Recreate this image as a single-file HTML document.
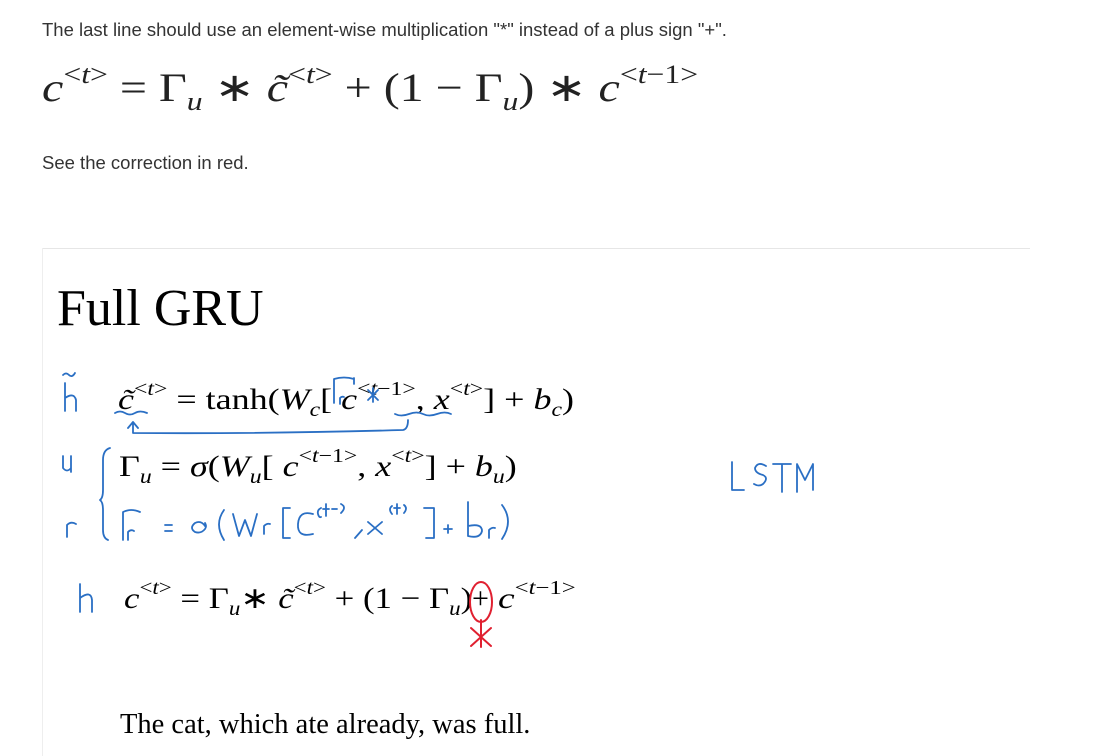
<!DOCTYPE html>
<html><head><meta charset="utf-8"><style>
body{margin:0;width:1106px;height:756px;background:#fff;position:relative;overflow:hidden;font-family:"Liberation Serif",serif;}
.a{position:absolute;white-space:nowrap;line-height:1;transform-origin:left top;}
.t{font-family:"Liberation Sans",sans-serif;font-size:18.5px;color:#333;}
i{font-style:italic}
sup{font-size:66%;vertical-align:0;position:relative;top:-0.7em}
sub{font-size:66%;vertical-align:0;position:relative;top:0.35em}
</style></head><body>
<div class="a t" style="left:42px;top:21px">The last line should use an element-wise multiplication "*" instead of a plus sign "+".</div>
<div class="a" style="left:42px;top:68px;font-size:40px;color:#222;transform:scaleX(1.2)"><i>c</i><sup>&lt;<i>t</i>&gt;</sup> = Γ<sub><i>u</i></sub> ∗ <i>c̃</i><sup>&lt;<i>t</i>&gt;</sup> + (1 − Γ<sub><i>u</i></sub>) ∗ <i>c</i><sup>&lt;<i>t</i>−1&gt;</sup></div>
<div class="a t" style="left:42px;top:154px">See the correction in red.</div>
<div class="a" style="left:42px;top:248px;width:988px;height:1px;background:#e6e6e6"></div>
<div class="a" style="left:42px;top:248px;width:1px;height:508px;background:#eee"></div>
<div class="a" style="left:57px;top:283px;font-size:52px;color:#000">Full GRU</div>
<div class="a" style="left:118px;top:385px;font-size:30px;transform:scaleX(1.2)"><i>c̃</i><sup>&lt;<i>t</i>&gt;</sup> = tanh(<i>W<sub>c</sub></i>[ <i>c</i><sup>&lt;<i>t</i>−1&gt;</sup>, <i>x</i><sup>&lt;<i>t</i>&gt;</sup>] + <i>b<sub>c</sub></i>)</div>
<div class="a" style="left:119px;top:452px;font-size:30px;transform:scaleX(1.2)">Γ<sub><i>u</i></sub> = <i>σ</i>(<i>W<sub>u</sub></i>[ <i>c</i><sup>&lt;<i>t</i>−1&gt;</sup>, <i>x</i><sup>&lt;<i>t</i>&gt;</sup>] + <i>b<sub>u</sub></i>)</div>
<div class="a" style="left:124px;top:584px;font-size:30px;transform:scaleX(1.16)"><i>c</i><sup>&lt;<i>t</i>&gt;</sup> = Γ<sub><i>u</i></sub>∗ <i>c̃</i><sup>&lt;<i>t</i>&gt;</sup> + (1 − Γ<sub><i>u</i></sub>)</div>
<div class="a" style="left:472px;top:584px;font-size:30px">+</div>
<div class="a" style="left:498px;top:584px;font-size:30px;transform:scaleX(1.25)"><i>c</i><sup>&lt;<i>t</i>−1&gt;</sup></div>
<div class="a" style="left:120px;top:711px;font-size:28.5px">The cat, which ate already, was full.</div>
<svg class="a" style="left:0;top:0" width="1106" height="756" fill="none" stroke-linecap="round" stroke-linejoin="round">
<g stroke="#2a6fc4" stroke-width="1.8">
<path d="M63 375q3-3 6 0t6-2"/><path d="M65 383v28M65 398q9-6 11 2v11"/>
<path d="M115 413q5-3 10 0t10 0t12 0"/>
<path d="M128 428l5-6 5 6M133 423v10q130 1 270-3q5-1 5-10"/>
<path d="M395 414q6 3 14 0t14 0t14 0t14 0"/>
<path d="M334 403v-24q10-3 20 0M354 378v6M340 404v-6q2-2 4-1"/>
<path d="M368 390l10 10M378 390l-10 10M373 388v14"/>
<path d="M110 448q-7 2-7 12v30q0 8-3 10q3 2 3 10v20q0 8 5 10"/>
<path d="M63 456v12q4 5 8 0v-12M71 456v16"/>
<path d="M67 537v-12q4-4 9-1"/>
<path d="M123 540v-28q8-4 17 0M128 540v-8q3-3 6-1"/><path d="M165 525h7M165 531h7"/>
<path d="M205 526q-4-6-10-3q-6 5 0 9q6 2 10-3q2-3 0-6"/><path d="M224 510q-10 14 0 30"/>
<path d="M233 514l6 22 6-16 6 16 6-22M264 534v-8q3-3 6-2"/>
<path d="M290 508h-7v30h7"/><path d="M313 514q-14-4-15 10t15 10"/>
<path d="M321 508q-4 2-3 6t3 3M326 504v12M323 509h6M332 509h5M341 504q6 3 0 9"/>
<path d="M362 530l-7 8M368 522l14 12M382 522l-14 12"/><path d="M392 506q-4 3 0 8M397 504v10M394 508h6M404 505q4 3 0 8"/>
<path d="M424 508h10v30h-8"/><path d="M448 525v8M444 529h8"/><path d="M468 502v34q12 3 14-5q0-8-14-5"/><path d="M489 538v-8q3-3 6-2"/><path d="M502 505q12 16 0 34"/>
<path d="M732 462v28h12M766 466q-8-5-11 2q0 5 8 7q6 3 0 9q-4 3-9 0M773 464h18M782 464v28M797 492v-28l8 16 8-16v26"/>
<path d="M80 584v28M80 598q11-8 12 2v12"/>
</g>
<g stroke="#e02030" stroke-width="2">
<ellipse cx="481" cy="602" rx="11" ry="20"/><path d="M481 620v27M471 628l20 18M491 628l-20 18"/>
</g>
</svg>
</body></html>
